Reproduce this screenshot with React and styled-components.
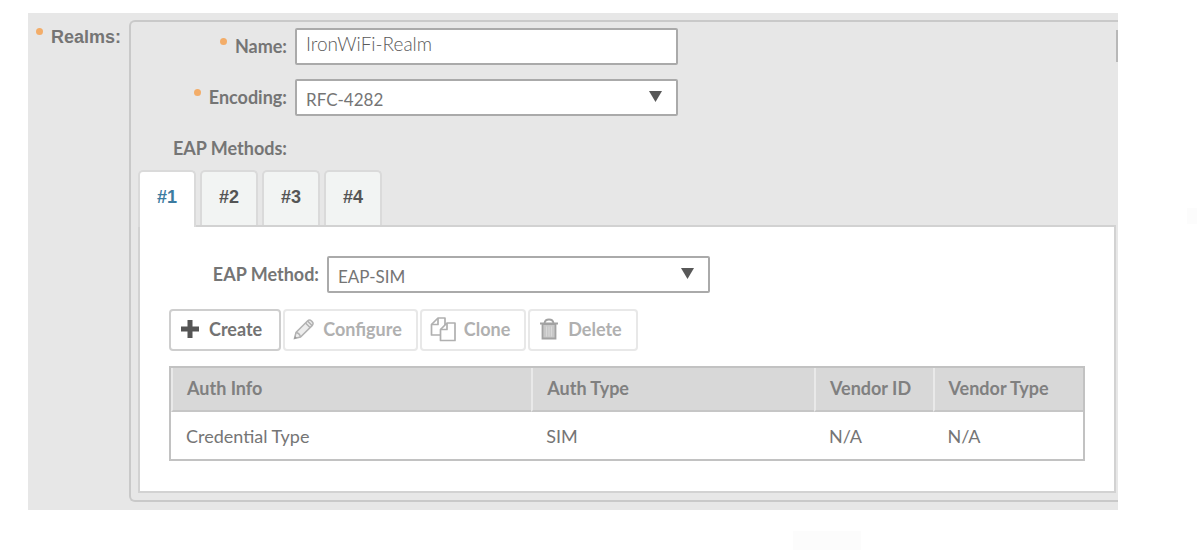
import React, { useState } from "react";
import styled, { createGlobalStyle, css } from "styled-components";

const GlobalStyle = createGlobalStyle`
  *, *::before, *::after { box-sizing: border-box; }
  body {
    margin: 0;
    background: #fff;
    color: #757575;
    font-family: "Lato", "Open Sans", sans-serif;
    font-size: 18px;
    line-height: 24px;
  }
`;

const Page = styled.main`
  position: relative;
  min-height: 100vh;
  padding: 13px 79px 40px 28px;
`;

const Patch = styled.span`
  position: absolute;
  background: #fcfcfc;
`;

const FooterPatch = styled(Patch)`
  left: 793px;
  bottom: 0;
  width: 68px;
  height: 19px;
`;

const SidePatch = styled(Patch)`
  right: 0;
  top: 208px;
  width: 10px;
  height: 16px;
`;

const Section = styled.section`
  position: relative;
  display: flex;
  background: #e7e7e7;
  padding: 7px 0 8px;
`;

const EdgeMark = styled.span`
  position: absolute;
  top: 17px;
  right: 0;
  width: 2px;
  height: 32px;
  background: #b8b8b8;
`;

const SectionTitle = styled.h2`
  flex: 0 0 101px;
  margin: 0;
  padding: 5px 8px 0 0;
  font: 700 18px/24px "Liberation Sans", Arial, sans-serif;
  text-align: right;
`;

const Star = styled.span`
  display: inline-block;
  width: 7px;
  height: 7px;
  margin-right: 8px;
  border-radius: 50%;
  background: #f3ad69;
  vertical-align: 8px;
`;

const Frame = styled.form`
  flex: 1;
  min-width: 0;
  margin: 0;
  padding: 6px 0 7px 7px;
  border: 2px solid #c9c9c9;
  border-right: 0;
  border-radius: 6px 0 0 6px;
`;

const Field = styled.div`
  display: grid;
  grid-template-columns: ${(p) => p.$label}px minmax(0, 383px);
  column-gap: 8px;
  align-items: center;
  margin-bottom: ${(p) => p.$gap}px;
`;

const Label = styled.label`
  padding-bottom: 2px;
  font-weight: 700;
  text-align: right;
`;

const GroupLabel = styled.p`
  width: 149px;
  margin: 0 0 10px;
  font-weight: 700;
  text-align: right;
`;

const control = css`
  width: 100%;
  height: 37px;
  border: 2px solid #aaa;
  border-radius: 2px;
  background: #fff;
  color: #757575;
  outline: none;
`;

const TextInput = styled.input`
  ${control}
  padding: 0 9px 6px;
  font: 300 19px "Lato", sans-serif;
  color: #5a5a5a;
`;

const SelectBox = styled.div`
  display: grid;
  align-items: center;
`;

const Select = styled.select`
  ${control}
  grid-area: 1 / 1;
  appearance: none;
  padding: 4px 40px 0 9px;
  font: 400 17px "Lato", sans-serif;
`;

const Arrow = styled.svg`
  grid-area: 1 / 1;
  justify-self: end;
  width: 13px;
  height: 11px;
  margin: 0 16px 2px 0;
  pointer-events: none;
`;

const Tabs = styled.div`
  display: flex;
  gap: 4px;
`;

const Tab = styled.button`
  width: 58px;
  height: 55px;
  padding: 0 0 2px;
  border: 2px solid #dadada;
  border-bottom: 0;
  border-radius: 5px 5px 0 0;
  background: #f2f4f3;
  color: #555;
  font: 700 18px "Liberation Sans", Arial, sans-serif;

  &[aria-selected="true"] {
    z-index: 1;
    height: 57px;
    margin-bottom: -2px;
    padding-bottom: 4px;
    background: #fff;
    color: #3c7ba0;
  }
`;

const Panel = styled.div`
  margin-right: 2px;
  padding: 29px 29px 30px;
  border: 2px solid #d2d2d2;
  background: #fff;
`;

const Toolbar = styled.div`
  display: flex;
  gap: 2px;
  margin-bottom: 15px;
`;

const ToolButton = styled.button`
  display: flex;
  align-items: center;
  gap: 8px;
  height: 42px;
  padding: 0 14px 2px 8px;
  border: 2px solid #e8e8e8;
  border-radius: 4px;
  background: #fff;
  color: #b0b0b0;
  font: 700 18px "Lato", sans-serif;

  &:enabled {
    padding-right: 17px;
    border-color: #cecece;
    color: #737373;
  }
`;

const Table = styled.table`
  width: 100%;
  table-layout: fixed;
  border-collapse: separate;
  border-spacing: 0;
  border: 2px solid #c2c2c2;
`;

const HeadCell = styled.th`
  width: ${(p) => p.$width || "auto"};
  height: 44px;
  padding: 0 0 2px 14px;
  border-left: 2px solid #e9e9e9;
  border-bottom: 2px solid #c6c6c6;
  background: #d8d8d8;
  color: #808080;
  font-weight: 700;
  text-align: left;
`;

const Cell = styled.td`
  height: 47px;
  padding: 0 0 0 15px;
`;

const PlusIcon = () => (
  <svg width="22" height="22" viewBox="0 0 22 22" aria-hidden="true">
    <path d="M11 2v18M2 11h18" stroke="#555" strokeWidth="5" />
  </svg>
);

const PencilIcon = () => (
  <svg width="22" height="22" viewBox="0 0 22 22" fill="#ededed" stroke="#b2b2b2" strokeWidth="1.5" aria-hidden="true">
    <path d="M1.5 20.5 3 14.5 14.5 3q2-2 4 0l.6.6q2 2 0 4L7.5 19Z" />
    <path d="M3 14.5q3.5.5 4.5 4.5M12.5 5l4.5 4.5M14.5 3l4.5 4.6" fill="none" />
    <path d="m1 21 1-3 2 2Z" fill="#999" stroke="none" />
  </svg>
);

const CloneIcon = () => (
  <svg width="26" height="26" viewBox="0 0 26 26" fill="#fff" stroke="#b0b0b0" strokeWidth="1.7" strokeLinejoin="round" aria-hidden="true">
    <path d="M1.5 8.5 8 2h7v17H1.5Z" />
    <path d="M1.5 8.5H8V2" fill="none" />
    <path d="M10.5 13.5 17 7h8v17.5H10.5Z" />
    <path d="M10.5 13.5H17V7" fill="none" />
  </svg>
);

const TrashIcon = () => (
  <svg width="22" height="24" viewBox="0 0 22 24" fill="none" stroke="#a2a2a2" strokeWidth="1.8" aria-hidden="true">
    <path d="M2 6.5h18M6.5 6Q7 2.5 11 2.5T15.5 6" />
    <path d="M4.5 7h13v14.5h-13Z" fill="#c8c8c8" />
    <path d="M8.5 9.5v10M11 9.5v10M13.5 9.5v10" stroke="#d8d8d8" strokeWidth="1" />
  </svg>
);

function Dropdown({ id, children }) {
  return (
    <SelectBox>
      <Select id={id}>{children}</Select>
      <Arrow viewBox="0 0 13 11" aria-hidden="true">
        <path d="M0 0h13L6.5 11Z" fill="#585858" />
      </Arrow>
    </SelectBox>
  );
}

export default function App() {
  const [tab, setTab] = useState(1);
  const [name, setName] = useState("IronWiFi-Realm");

  return (
    <>
      <GlobalStyle />
      <Page>
        <Section>
          <SectionTitle><Star />Realms:</SectionTitle>
          <Frame>
            <Field $label={149} $gap={14}>
              <Label htmlFor="name"><Star />Name:</Label>
              <TextInput id="name" value={name} onChange={(e) => setName(e.target.value)} />
            </Field>
            <Field $label={149} $gap={20}>
              <Label htmlFor="encoding"><Star />Encoding:</Label>
              <Dropdown id="encoding"><option>RFC-4282</option></Dropdown>
            </Field>
            <GroupLabel>EAP Methods:</GroupLabel>
            <Tabs role="tablist" aria-label="EAP Methods">
              {[1, 2, 3, 4].map((n) => (
                <Tab key={n} type="button" role="tab" aria-selected={tab === n} onClick={() => setTab(n)}>
                  #{n}
                </Tab>
              ))}
            </Tabs>
            <Panel role="tabpanel">
              <Field $label={150} $gap={16}>
                <Label htmlFor="method">EAP Method:</Label>
                <Dropdown id="method"><option>EAP-SIM</option></Dropdown>
              </Field>
              <Toolbar>
                <ToolButton type="button"><PlusIcon />Create</ToolButton>
                <ToolButton type="button" disabled><PencilIcon />Configure</ToolButton>
                <ToolButton type="button" disabled><CloneIcon />Clone</ToolButton>
                <ToolButton type="button" disabled><TrashIcon />Delete</ToolButton>
              </Toolbar>
              <Table>
                <thead>
                  <tr>
                    <HeadCell $width="39.5%">Auth Info</HeadCell>
                    <HeadCell $width="31%">Auth Type</HeadCell>
                    <HeadCell $width="13%">Vendor ID</HeadCell>
                    <HeadCell>Vendor Type</HeadCell>
                  </tr>
                </thead>
                <tbody>
                  <tr>
                    <Cell>Credential Type</Cell>
                    <Cell>SIM</Cell>
                    <Cell>N/A</Cell>
                    <Cell>N/A</Cell>
                  </tr>
                </tbody>
              </Table>
            </Panel>
          </Frame>
          <EdgeMark />
        </Section>
        <FooterPatch />
        <SidePatch />
      </Page>
    </>
  );
}
